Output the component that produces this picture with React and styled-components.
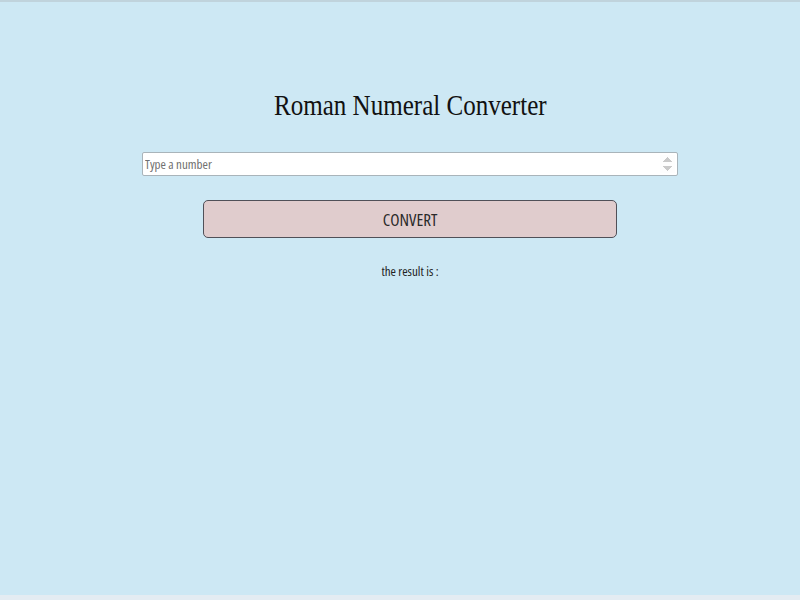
import React from "react";
import styled, { createGlobalStyle } from "styled-components";

const Global = createGlobalStyle`
  html, body { margin: 0; padding: 0; }
  body { background: #cde8f4; }
  #root { min-height: 600px; }
`;

const Page = styled.div`
  box-sizing: border-box;
  width: 800px;
  height: 600px;
  background: #cde8f4;
  border-top: 2px solid #c0d3dc;
  border-bottom: 5px solid #e4ecf2;
  display: flex;
  flex-direction: column;
  align-items: center;
  padding-left: 20px;
  padding-top: 83px;
  font-family: "Open Sans", sans-serif;
  font-stretch: 75%;
`;

const Title = styled.h1`
  margin: 0;
  font-family: "Liberation Serif", "Times New Roman", serif;
  font-weight: 400;
  font-size: 30px;
  line-height: 40px;
  color: #111;
  transform: scaleX(0.835);
`;

const NumberInput = styled.input`
  box-sizing: border-box;
  margin-top: 27px;
  width: 536px;
  height: 24px;
  padding: 0 2px;
  border: 1px solid #a9b4ba;
  border-radius: 2px;
  background: #fff;
  font-family: "Open Sans", sans-serif;
  font-stretch: 75%;
  font-size: 13px;
  color: #333;
  outline: none;
  &::placeholder { color: #6f6f6f; }
  &::-webkit-inner-spin-button { opacity: 0.45; }
`;

const ConvertButton = styled.button`
  box-sizing: border-box;
  margin-top: 24px;
  width: 414px;
  height: 38px;
  background: #e0cccd;
  border: 1px solid #505058;
  border-radius: 5px;
  font-family: "Open Sans", sans-serif;
  font-stretch: 75%;
  font-size: 17px;
  color: #2a2a2a;
`;

const Result = styled.p`
  margin: 24px 0 0;
  font-size: 13px;
  color: #222;
`;

export default function App() {
  return (
    <>
      <Global />
      <Page>
        <Title>Roman Numeral Converter</Title>
        <NumberInput type="number" placeholder="Type a number" />
        <ConvertButton>CONVERT</ConvertButton>
        <Result>the result is :</Result>
      </Page>
    </>
  );
}
